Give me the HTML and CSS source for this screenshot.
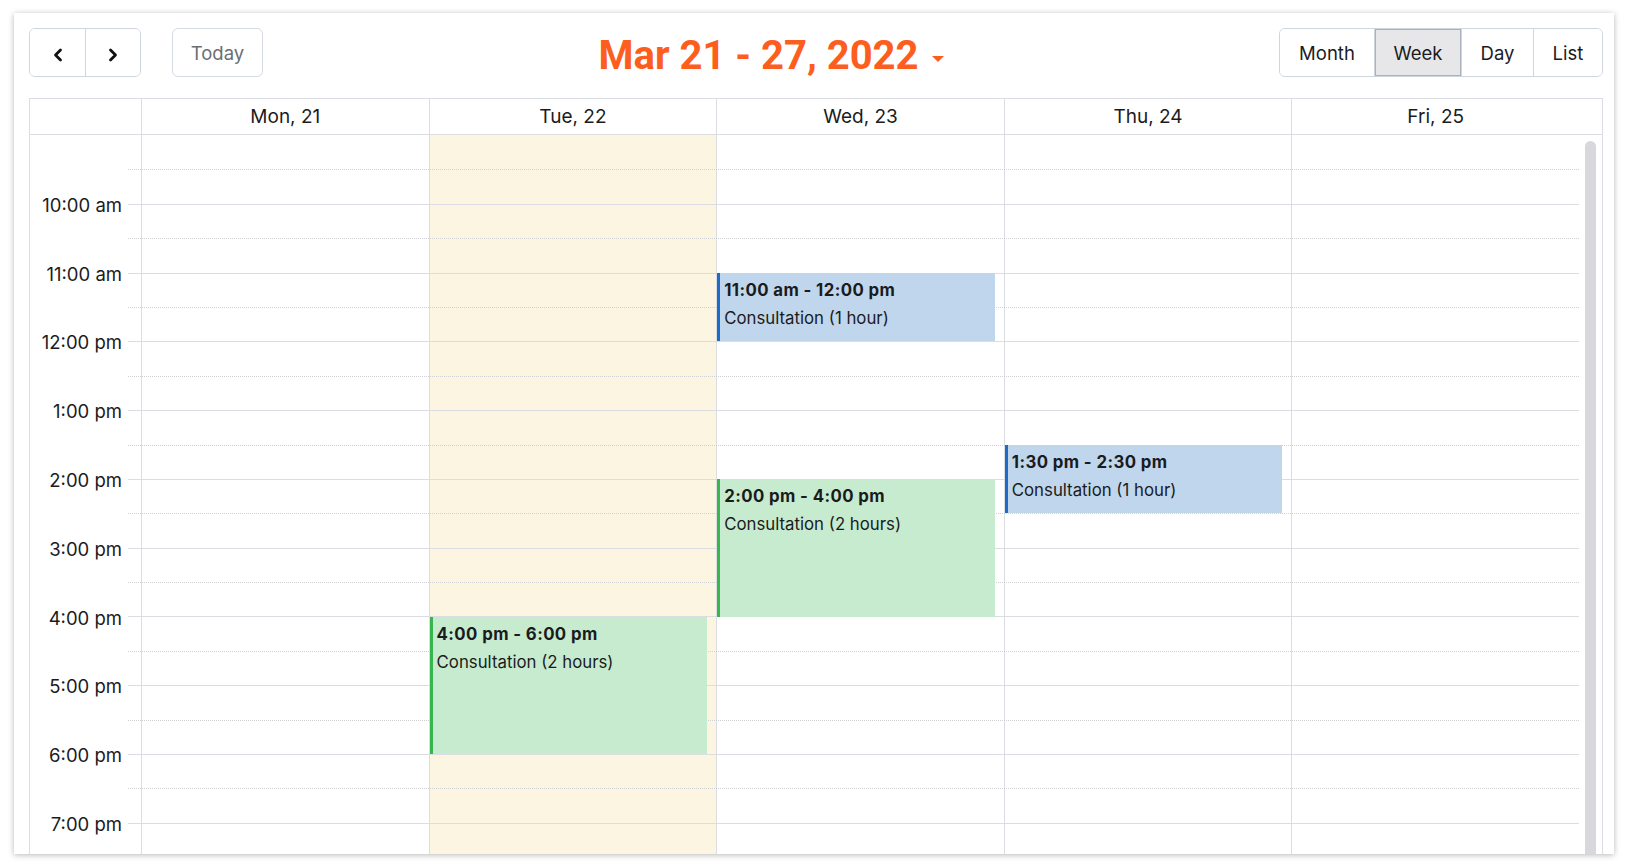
FILE: index.html
```html
<!DOCTYPE html>
<html lang="en">
<head>
<meta charset="utf-8">
<title>Calendar – Week</title>
<link rel="stylesheet" href="styles.css">
</head>
<body>
<div class="card">
  <div class="toolbar">
    <div class="tb-left">
      <div class="btn-group">
        <button class="btn btn-icon" aria-label="Previous">
          <svg width="10" height="14" viewBox="0 0 10 14"><polyline points="7.5,2 2.5,7 7.5,12" fill="none" stroke="#111" stroke-width="2.8" stroke-linecap="round" stroke-linejoin="round"/></svg>
        </button>
        <button class="btn btn-icon" aria-label="Next">
          <svg width="10" height="14" viewBox="0 0 10 14"><polyline points="2.5,2 7.5,7 2.5,12" fill="none" stroke="#111" stroke-width="2.8" stroke-linecap="round" stroke-linejoin="round"/></svg>
        </button>
      </div>
      <button class="btn btn-today">Today</button>
    </div>
    <div class="title">Mar 21 - 27, 2022<span class="caret"></span></div>
    <div class="btn-group views">
      <button class="btn">Month</button>
      <button class="btn active">Week</button>
      <button class="btn">Day</button>
      <button class="btn">List</button>
    </div>
  </div>

  <div class="cal">
    <div class="head">
      <div class="head-axis"></div>
      <div class="head-day">Mon, 21</div>
      <div class="head-day">Tue, 22</div>
      <div class="head-day">Wed, 23</div>
      <div class="head-day">Thu, 24</div>
      <div class="head-day">Fri, 25</div>
      <div class="head-gutter"></div>
    </div>

    <div class="body">
      <div class="axis">
        <div class="axis-label">10:00 am</div>
        <div class="axis-label">11:00 am</div>
        <div class="axis-label">12:00 pm</div>
        <div class="axis-label">1:00 pm</div>
        <div class="axis-label">2:00 pm</div>
        <div class="axis-label">3:00 pm</div>
        <div class="axis-label">4:00 pm</div>
        <div class="axis-label">5:00 pm</div>
        <div class="axis-label">6:00 pm</div>
        <div class="axis-label">7:00 pm</div>
      </div>

      <div class="day d1"></div>
      <div class="day d2 today"></div>
      <div class="day d3"></div>
      <div class="day d4"></div>
      <div class="day d5"></div>

      <div class="lines">
        <div class="slot half"></div><div class="slot"></div>
        <div class="slot half"></div><div class="slot"></div>
        <div class="slot half"></div><div class="slot"></div>
        <div class="slot half"></div><div class="slot"></div>
        <div class="slot half"></div><div class="slot"></div>
        <div class="slot half"></div><div class="slot"></div>
        <div class="slot half"></div><div class="slot"></div>
        <div class="slot half"></div><div class="slot"></div>
        <div class="slot half"></div><div class="slot"></div>
        <div class="slot half"></div><div class="slot"></div>
        <div class="slot half"></div><div class="slot"></div>
        <div class="slot half"></div><div class="slot"></div>
      </div>

      <div class="events d2">
        <div class="event green" style="top: 481.6px; height: 137.6px;">
          <div class="ev-time">4:00 pm - 6:00 pm</div>
          <div class="ev-title">Consultation (2 hours)</div>
        </div>
      </div>
      <div class="events d3">
        <div class="event blue" style="top: 137.6px; height: 68.8px;">
          <div class="ev-time">11:00 am - 12:00 pm</div>
          <div class="ev-title">Consultation (1 hour)</div>
        </div>
        <div class="event green" style="top: 344px; height: 137.6px;">
          <div class="ev-time">2:00 pm - 4:00 pm</div>
          <div class="ev-title">Consultation (2 hours)</div>
        </div>
      </div>
      <div class="events d4">
        <div class="event blue" style="top: 309.6px; height: 68.8px;">
          <div class="ev-time">1:30 pm - 2:30 pm</div>
          <div class="ev-title">Consultation (1 hour)</div>
        </div>
      </div>

      <div class="gutter"><div class="thumb"></div></div>
    </div>
  </div>
</div>
</body>
</html>
```

FILE: styles.css
```css
* { box-sizing: border-box; }

html, body {
  margin: 0;
  padding: 0;
  background: #ffffff;
}

body {
  width: 1628px;
  height: 868px;
  overflow: hidden;
  font-family: "Inter", "Noto Sans", sans-serif;
  color: #1b1b1d;
}

.card {
  margin: 13px 0 0 14px;
  width: 1600px;
  height: 841px;
  padding: 15px 11px 0 15px;
  background: #fff;
  overflow: hidden;
  box-shadow: 0 1px 6px rgba(0, 0, 0, 0.28);
}

/* ---------- toolbar ---------- */
.toolbar {
  display: flex;
  align-items: center;
  justify-content: space-between;
  height: 49px;
  margin-bottom: 21px;
}

.tb-left {
  display: flex;
  align-items: center;
  gap: 31px;
}

.btn-group {
  display: flex;
  height: 49px;
  border: 1px solid #cfd5dc;
  border-radius: 6px;
  overflow: hidden;
}

.btn {
  font-family: inherit;
  font-size: 18.5px;
  color: #1b1b1d;
  background: #fff;
  border: none;
  margin: 0;
  padding: 0 19px;
  height: 100%;
  cursor: pointer;
}

.btn-group .btn + .btn {
  border-left: 1px solid #cfd5dc;
}

.btn-icon {
  width: 55px;
  padding: 4px 0 0;
  display: flex;
  align-items: center;
  justify-content: center;
}

.btn-today {
  height: 49px;
  width: 91px;
  padding: 0;
  border: 1px solid #d6dbe1;
  border-radius: 6px;
  color: #6b6e73;
}

.views .btn.active {
  background: #e7e7e9;
  box-shadow: inset 0 0 0 1px #aab3bd;
}

.views .btn:first-child { width: 94px; padding: 0; }
.views .btn:nth-child(2) { width: 87px; padding: 0; }
.views .btn:nth-child(3) { width: 72px; padding: 0; }
.views .btn:nth-child(4) { width: 69px; padding: 0; }

.title {
  display: flex;
  align-items: center;
  font-family: "Roboto", "Liberation Sans", sans-serif;
  font-weight: 700;
  font-size: 40px;
  color: #fd5e1e;
  padding-top: 6px;
}

.caret {
  width: 0;
  height: 0;
  margin-left: 13px;
  margin-top: 6px;
  border-left: 6px solid transparent;
  border-right: 6px solid transparent;
  border-top: 6px solid #fd5e1e;
}

/* ---------- calendar table ---------- */
.cal {
  border: 1px solid #dcdde3;
  border-bottom: none;
}

.head,
.body {
  display: grid;
  grid-template-columns: 98px 13px repeat(5, 1fr) 23px;
}

.head {
  border-bottom: 1px solid #dcdde3;
}

.head-axis { grid-column: 1 / 3; }

.head-day {
  height: 35px;
  line-height: 35px;
  text-align: center;
  font-size: 19px;
  border-left: 1px solid #dcdde3;
}

.head-gutter { grid-column: 8; }

.axis {
  grid-column: 1;
  grid-row: 1;
  padding: 35.4px 6px 0 0;
}

.axis-label {
  height: 68.8px;
  display: flex;
  align-items: center;
  justify-content: flex-end;
  font-size: 18.5px;
  color: #1b1b1d;
}

.day {
  grid-row: 1;
  border-left: 1px solid #dcdde3;
}

.d1 { grid-column: 3; }
.d2 { grid-column: 4; }
.d3 { grid-column: 5; }
.d4 { grid-column: 6; }
.d5 { grid-column: 7; }

.day.today {
  background: #fcf5e2;
}

.lines {
  grid-column: 2 / 8;
  grid-row: 1;
  padding-top: 1px;
}

.slot {
  height: 34.4px;
  border-bottom: 1px solid #dcdde2;
}

.slot.half {
  border-bottom: 1px dotted #cfd0d4;
}

.events {
  grid-row: 1;
  position: relative;
  margin-left: 1px;
}

.event {
  position: absolute;
  left: 0;
  right: 9px;
  padding: 3px 6px 0 4px;
  border-left: 3px solid;
  font-size: 16.8px;
  line-height: 28px;
  color: #1b1b1d;
  overflow: hidden;
  white-space: nowrap;
}

.event.blue {
  background: #bfd6ec;
  border-left-color: #1d6cc6;
}

.event.green {
  background: #c6ebcf;
  border-left-color: #37b64f;
}

.ev-time {
  font-weight: 700;
  letter-spacing: 0.4px;
}

.gutter {
  grid-column: 8;
  grid-row: 1;
  padding: 6px 0 0 6px;
}

.thumb {
  width: 11px;
  height: 820px;
  border-radius: 6px;
  background: #d8d8dc;
}
```
